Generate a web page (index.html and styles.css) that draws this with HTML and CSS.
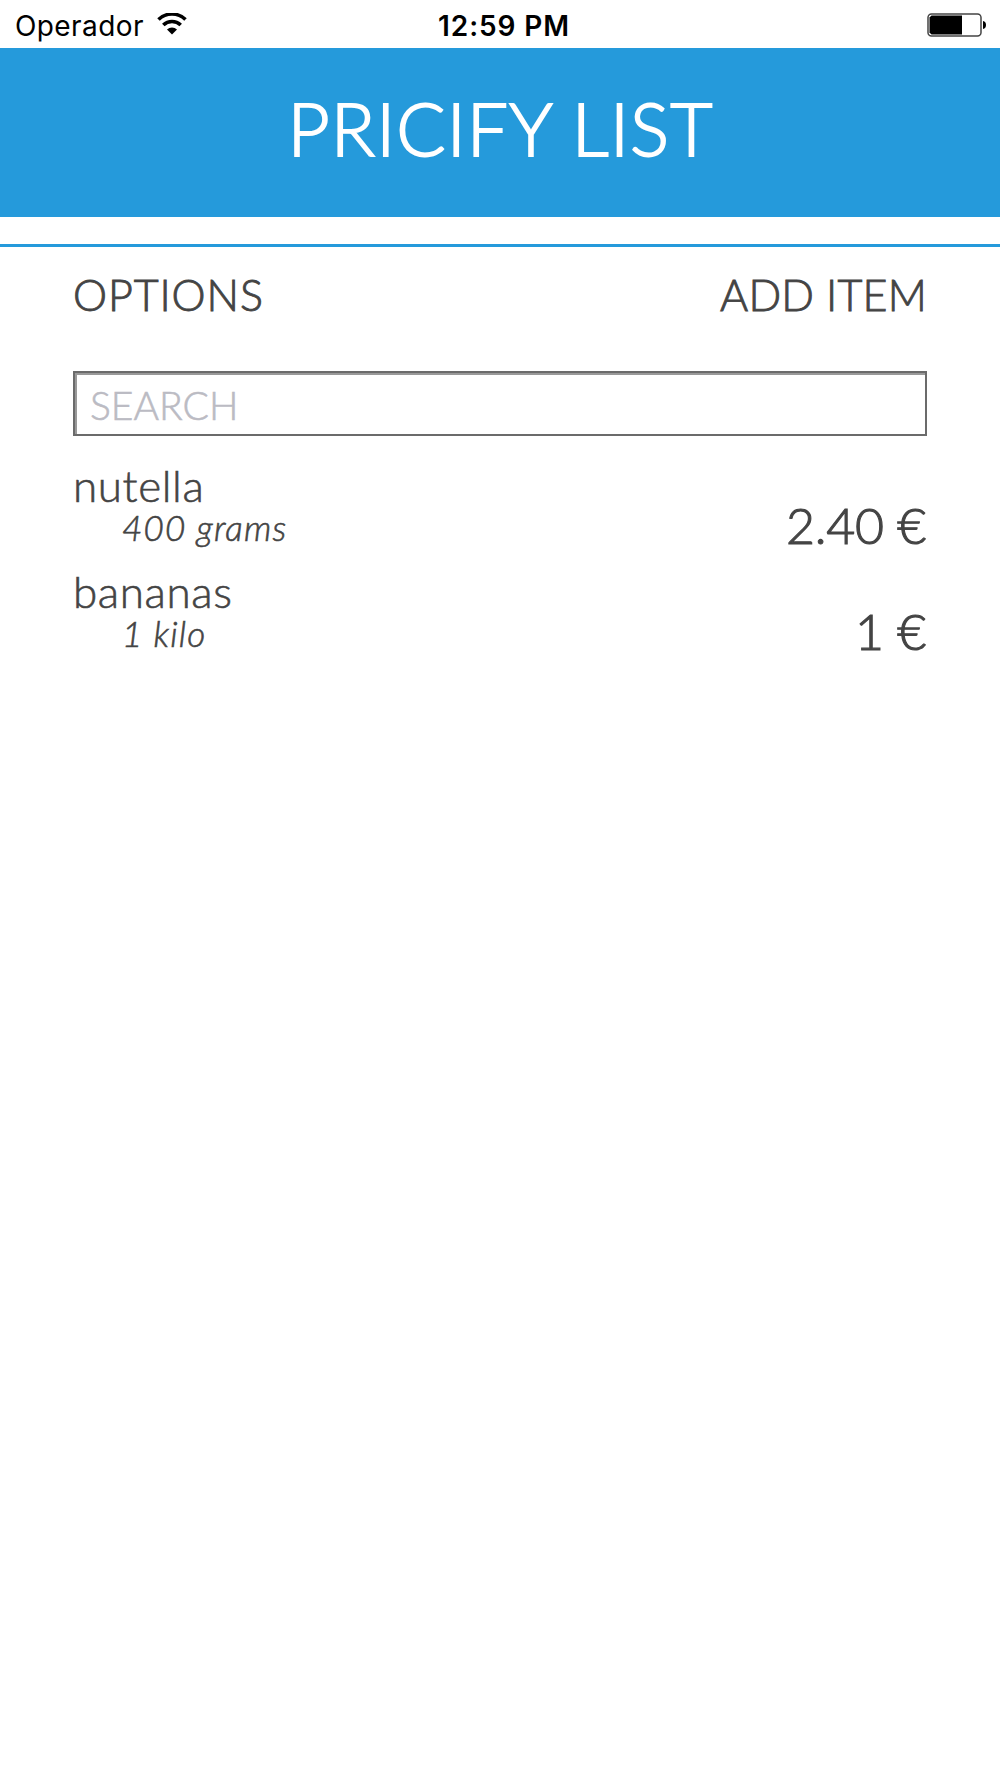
FILE: index.html
```
<!DOCTYPE html>
<html lang="en">
<head>
    <meta charset="UTF-8">
    <meta name="viewport" content="width=device-width, initial-scale=1.0">
    <title>Pricify List</title>
    <link rel="stylesheet" href="styles.css">
</head>
<body>
    <div class="status-bar">
        <div class="carrier">
            <span class="carrier-name">Operador</span>
            <svg class="wifi" width="30" height="22" viewBox="0 0 30 22">
                <path d="M1.5 6.5 A19.5 19.5 0 0 1 28.5 6.5" fill="none" stroke="#000" stroke-width="3.6"/>
                <path d="M6.3 12 A12.5 12.5 0 0 1 23.7 12" fill="none" stroke="#000" stroke-width="3.6"/>
                <path d="M10 16.4 A7.2 7.2 0 0 1 20 16.4 L15 21.5 Z"/>
            </svg>
        </div>
        <div class="time">12:59 PM</div>
        <div class="battery-box">
            <svg class="battery" width="60" height="24" viewBox="0 0 60 24">
                <rect x="1" y="1" width="53" height="22" rx="3.5" fill="#fff" stroke="#444" stroke-width="1.5"/>
                <path d="M4.5 2.5 H35 V21.5 H4.5 L2.5 19.5 V4.5 Z"/>
                <path d="M56 8 Q59 8.5 59 12 Q59 15.5 56 16 Z"/>
            </svg>
        </div>
    </div>

    <header class="header">
        <h1>PRICIFY LIST</h1>
    </header>

    <main class="content">
        <nav class="menu">
            <a class="options">OPTIONS</a>
            <a class="add-item">ADD ITEM</a>
        </nav>

        <input class="search" type="text" placeholder="SEARCH">

        <ul class="list">
            <li class="item">
                <div class="info">
                    <div class="name">nutella</div>
                    <div class="amount">400 grams</div>
                </div>
                <div class="price">2.40 €</div>
            </li>
            <li class="item">
                <div class="info">
                    <div class="name">bananas</div>
                    <div class="amount">1 kilo</div>
                </div>
                <div class="price">1 €</div>
            </li>
        </ul>
    </main>
</body>
</html>
```
FILE: styles.css
```
* {
    box-sizing: border-box;
}

body {
    margin: 0;
    background-color: #fff;
    color: #444;
    font-family: Lato, "Open Sans", sans-serif;
    font-weight: 300;
    -webkit-text-stroke: 0.6px;
}

.status-bar {
    display: grid;
    grid-template-columns: 1fr auto 1fr;
    align-items: center;
    height: 48px;
    padding: 2px 13px 0 15px;
    color: #000;
    font-family: Inter, sans-serif;
    font-size: 28px;
    font-weight: 400;
    -webkit-text-stroke: 0;
}

.carrier {
    display: flex;
    align-items: center;
    gap: 13px;
}

.carrier-name {
    padding-top: 1px;
    letter-spacing: 0.4px;
}

.wifi {
    margin-top: -3px;
}

.time {
    padding: 1px 0 0 6px;
    font-weight: 600;
    letter-spacing: 0.9px;
}

.battery-box {
    display: flex;
    justify-content: flex-end;
}

.header {
    height: 169px;
    background-color: #259adb;
    color: #fff;
    text-align: center;
}

.header h1 {
    margin: 0;
    padding-left: 1px;
    font-size: 73px;
    font-weight: 300;
    line-height: 161px;
    letter-spacing: 1.1px;
    -webkit-text-stroke: 1.8px;
}

.content {
    margin-top: 27px;
    padding: 0 73px;
    border-top: 3px solid #259adb;
}

.menu {
    display: flex;
    justify-content: space-between;
    height: 124px;
    font-size: 43px;
    line-height: 96px;
    -webkit-text-stroke: 0.9px;
}

.options {
    letter-spacing: 0.9px;
}

.add-item {
    letter-spacing: 0.2px;
}

.search {
    display: block;
    width: 100%;
    height: 65px;
    padding: 3px 15px 0;
    border: 2px solid #6b6b6b;
    box-shadow: inset 2px 2px 0 #999;
    background-color: #fff;
    font-family: inherit;
    font-size: 39px;
    font-weight: 300;
}

.search::placeholder {
    color: #bbbbc3;
}

.list {
    margin: 0;
    padding: 24px 0 0;
    list-style: none;
}

.item {
    display: flex;
    justify-content: space-between;
    height: 106px;
}

.name {
    padding-top: 1px;
    font-size: 44px;
    line-height: 48px;
    letter-spacing: 0.6px;
}

.amount {
    padding-left: 49px;
    font-size: 35px;
    font-style: italic;
    line-height: 36px;
    letter-spacing: 1.2px;
}

.price {
    padding: 35px 1px 0 0;
    font-size: 50px;
    line-height: 60px;
    letter-spacing: -0.2px;
    -webkit-text-stroke: 1.1px;
}
```
